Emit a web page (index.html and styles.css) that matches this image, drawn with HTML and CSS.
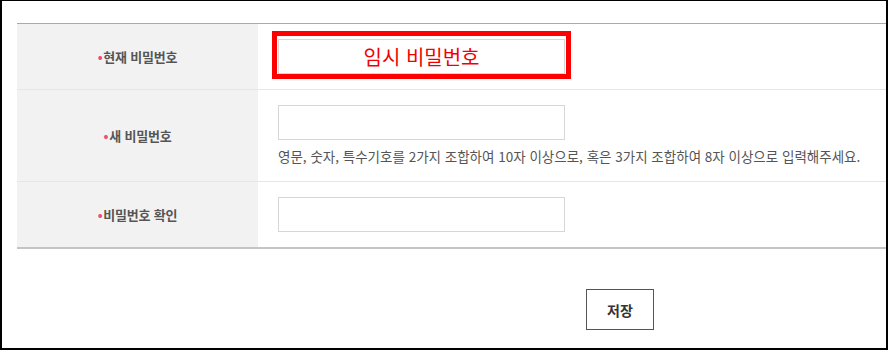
FILE: index.html
```html
<!DOCTYPE html>
<html lang="ko">

<head>
    <meta charset="UTF-8">
    <meta name="viewport" content="width=device-width, initial-scale=1.0">
    <title>비밀번호 변경</title>
    <link rel="stylesheet" href="styles.css">
</head>

<body>
    <div class="frame">
        <table class="pw-table">
            <tr class="row-current">
                <th><span class="req">•</span>현재 비밀번호</th>
                <td>
                    <span class="mark">
                        <input type="text" class="pw-input temp" value="임시 비밀번호" readonly>
                    </span>
                </td>
            </tr>
            <tr>
                <th><span class="req">•</span>새 비밀번호</th>
                <td>
                    <input type="password" class="pw-input">
                    <p class="help">영문, 숫자, 특수기호를 2가지 조합하여 10자 이상으로, 혹은 3가지 조합하여 8자 이상으로 입력해주세요.</p>
                </td>
            </tr>
            <tr>
                <th><span class="req">•</span>비밀번호 확인</th>
                <td>
                    <input type="password" class="pw-input">
                </td>
            </tr>
        </table>

        <div class="actions">
            <button type="button" class="save-btn">저장</button>
        </div>
    </div>
</body>

</html>
```

FILE: styles.css
```css
* {
    box-sizing: border-box;
}

body {
    margin: 0;
    font-family: "Noto Sans CJK KR", "Noto Sans", sans-serif;
    color: #555;
}

.frame {
    width: 888px;
    height: 350px;
    border-style: solid;
    border-color: #000;
    border-width: 1px 2px 2px 2px;
    padding: 22px 0 0 15px;
    background: #fff;
}

.pw-table {
    width: 100%;
    border-collapse: collapse;
    border-top: 1px solid #aaa;
    border-bottom: 2px solid #c4c4c4;
}

.pw-table th {
    width: 241px;
    background: #f2f2f2;
    font-size: 13px;
    font-weight: bold;
    color: #555;
    text-align: center;
    letter-spacing: -0.2px;
}

.pw-table td {
    padding: 15px 20px;
    vertical-align: top;
}

.pw-table tr + tr th,
.pw-table tr + tr td {
    border-top: 1px solid #e6e6e6;
}

.pw-table tr {
    height: 65px;
}

.req {
    color: #ee4a7a;
    margin-right: 1px;
}

.pw-input {
    display: block;
    width: 287px;
    height: 35px;
    border: 1px solid #d6d6d6;
    padding: 0 8px;
    font-family: inherit;
    font-size: 13px;
}

.row-current td {
    padding: 7px 14px 10px;
}

.mark {
    display: inline-block;
    border: 5px solid #ff0000;
    padding: 3px 1px 0 1px;
}

.temp {
    color: #f20000;
    font-size: 20px;
    text-align: center;
    line-height: 33px;
}

.help {
    margin: 7px 0 0;
    font-size: 13.5px;
    line-height: 19px;
    color: #555;
}

.actions {
    padding: 40px 0 0 569px;
}

.save-btn {
    width: 68px;
    height: 41px;
    border: 1px solid #555;
    background: #fff;
    font-family: inherit;
    font-size: 14px;
    font-weight: bold;
    color: #333;
    cursor: pointer;
}
```
